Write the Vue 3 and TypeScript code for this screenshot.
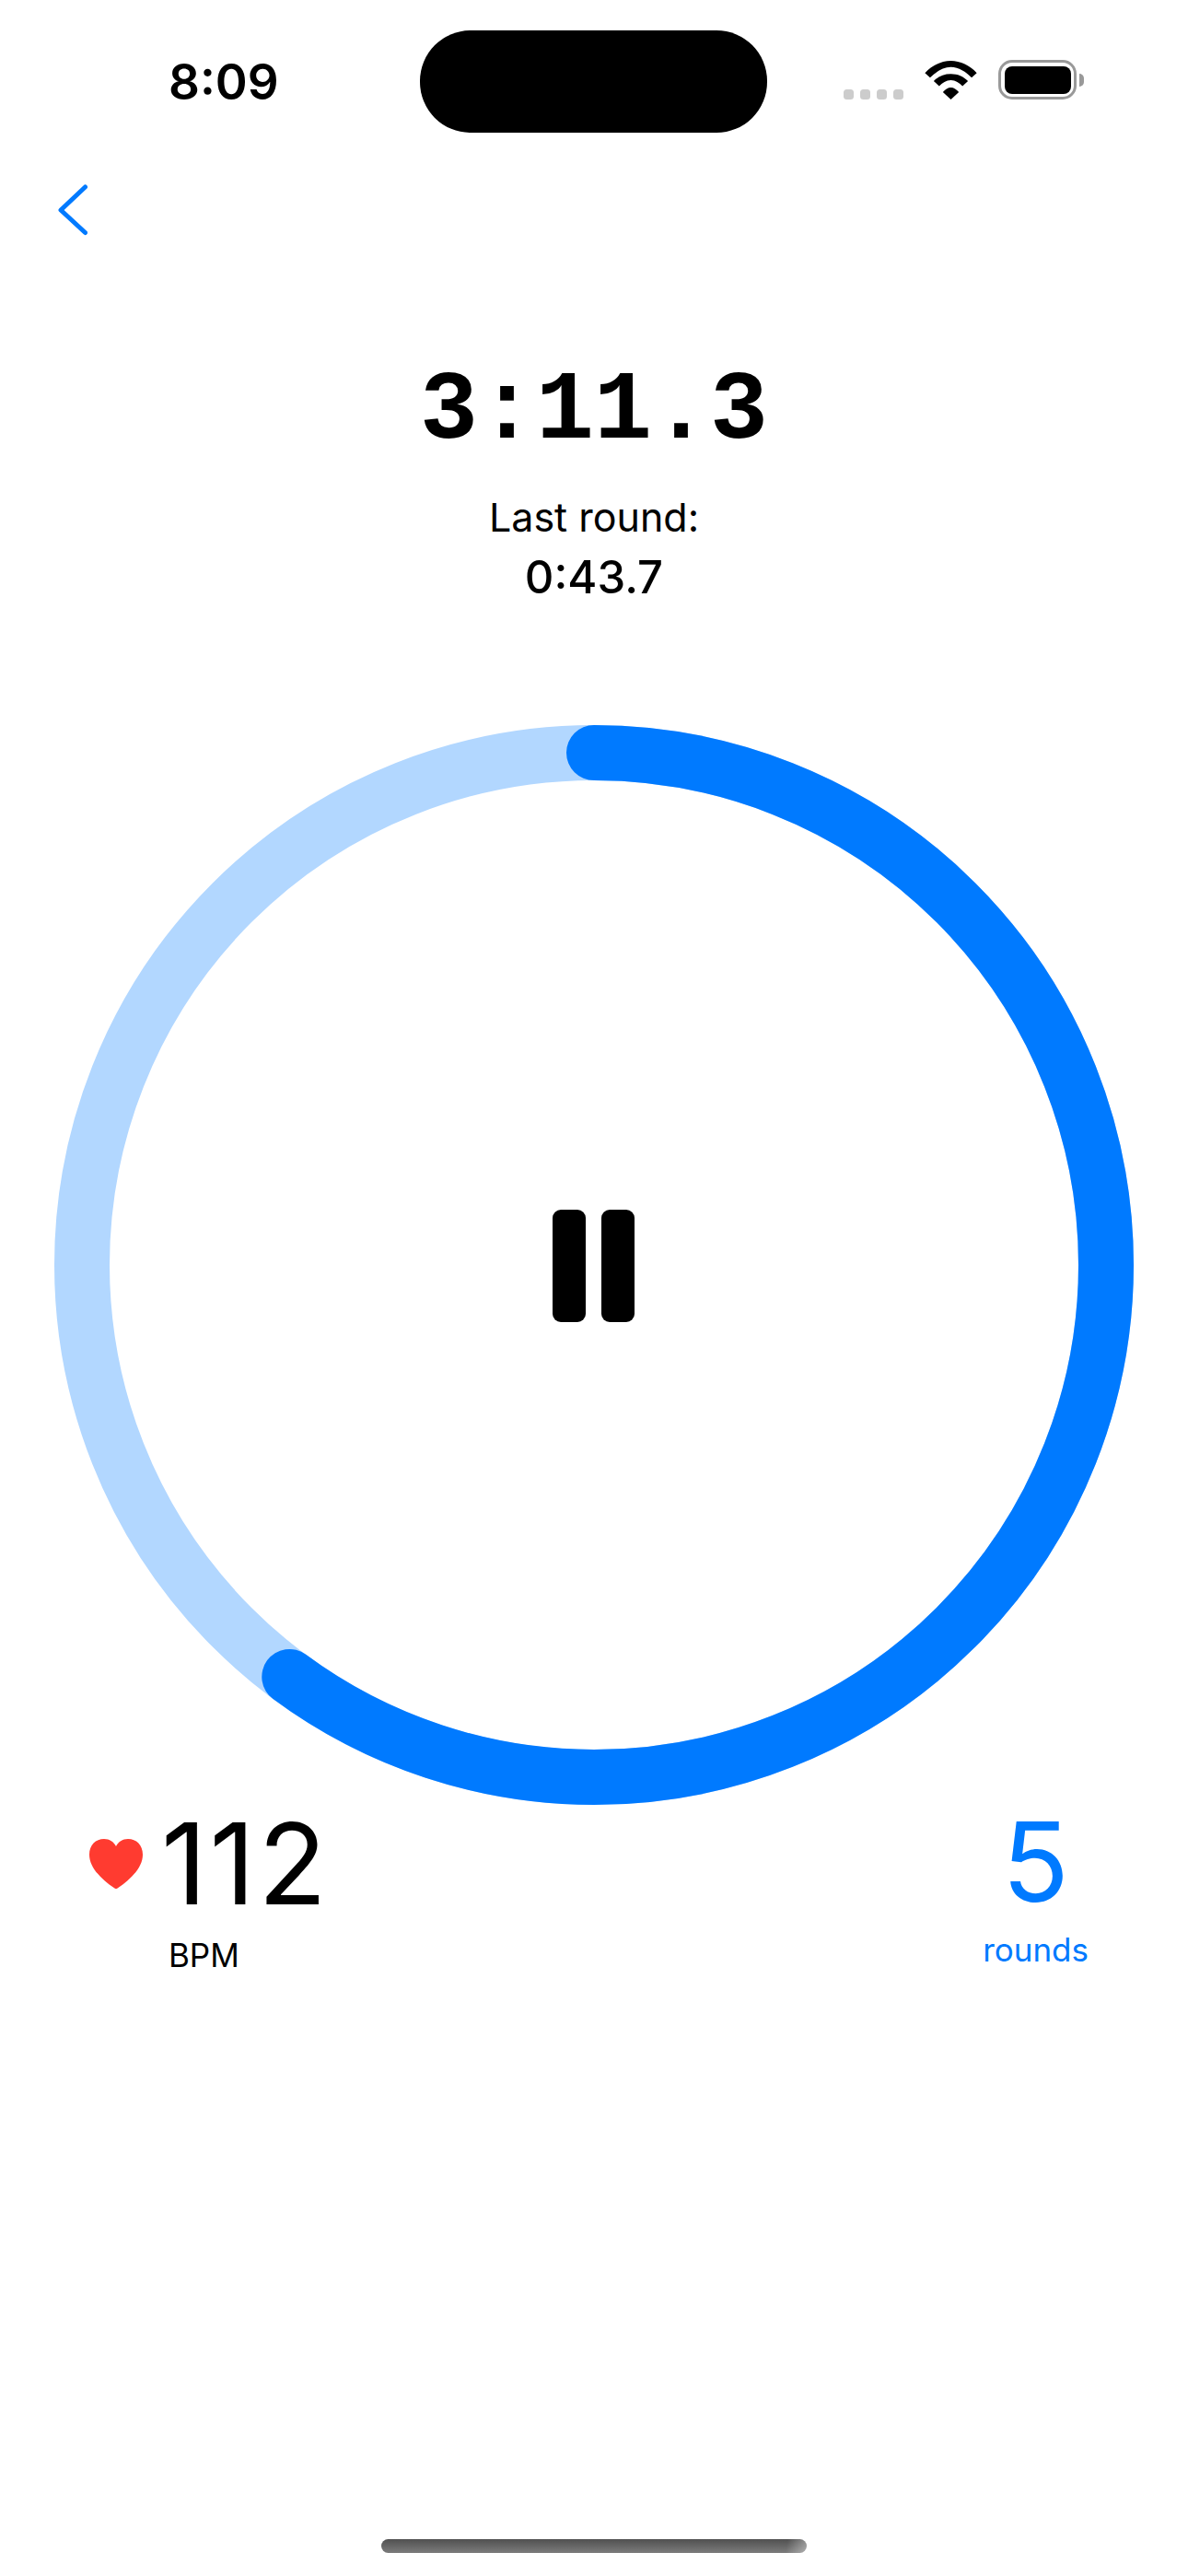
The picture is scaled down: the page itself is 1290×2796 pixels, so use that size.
<script setup lang="ts">
const elapsed = '3:11.3'
const lastRound = '0:43.7'
const bpm = 112
const rounds = 5

// how far round the ring the blue arc goes, in percent
const progress = (216.5 / 360) * 100
const signalDots = [1, 2, 3, 4]
</script>

<template>
  <div class="screen">
    <header class="status">
      <span class="clock">8:09</span>
      <div class="island"></div>
      <div class="indicators">
        <div class="signal">
          <i v-for="dot in signalDots" :key="dot"></i>
        </div>
        <svg class="wifi" width="57" height="42" viewBox="0 0 46 42" preserveAspectRatio="none">
          <path d="M0.3 13.2C6 5 15 0 23 0C31 0 40 5 45.7 13.2L41.2 18.3C36 12 30 6.8 23 6.8C16 6.8 10 12 4.8 18.3Z" />
          <path d="M8 22C12 17 17 14.3 23 14.3C29 14.3 34 17 38 22L33.2 27.6C30.5 24 27 21 23 21C19 21 15.5 24 12.8 27.6Z" />
          <path d="M16 34C18 31 20.5 29 23 29C25.5 29 28 31 30 34L23 42Z" />
        </svg>
        <div class="battery">
          <div class="battery-body"><div class="battery-fill"></div></div>
          <div class="battery-nub"></div>
        </div>
      </div>
    </header>

    <nav class="nav">
      <svg width="32" height="58" viewBox="0 0 32 58" fill="none">
        <path d="M29.5 5L3 30L29.5 54.5" stroke="#007aff" stroke-width="5" stroke-linecap="round" stroke-linejoin="round" />
      </svg>
    </nav>

    <section class="timer">
      <div class="elapsed">{{ elapsed }}</div>
      <div class="last-label">Last round:</div>
      <div class="last-value">{{ lastRound }}</div>
    </section>

    <section class="ring">
      <svg width="1172" height="1172" viewBox="0 0 1172 1172" fill="none">
        <circle cx="586" cy="586" r="556" stroke="#b2d7ff" stroke-width="60" />
        <circle
          cx="586"
          cy="586"
          r="556"
          stroke="#007aff"
          stroke-width="60"
          stroke-linecap="round"
          pathLength="100"
          :stroke-dasharray="`${progress} 100`"
          transform="rotate(-90 586 586)"
        />
      </svg>
      <div class="pause">
        <span></span>
        <span></span>
      </div>
    </section>

    <section class="stats">
      <div class="stat">
        <div class="heart-row">
          <svg width="58" height="54" viewBox="0 0 58 54">
            <path fill="#ff3b30" d="M29 8C31.5 3 36 0 42 0C51 0 58 6.5 58 17C58 32 43 45 32 52.5C30.5 53.5 29.5 54 29 54C28.5 54 27.5 53.5 26 52.5C15 45 0 32 0 17C0 6.5 7 0 16 0C22 0 26.5 3 29 8Z" />
          </svg>
          <span class="big bpm">{{ bpm }}</span>
        </div>
        <div class="unit bpm-unit">BPM</div>
      </div>
      <div class="stat blue">
        <span class="big">{{ rounds }}</span>
        <div class="unit">rounds</div>
      </div>
    </section>

    <div class="home-bar"></div>
  </div>
</template>

<style>
html,
body {
  margin: 0;
  background: #fff;
}
</style>

<style scoped>
.screen {
  width: 1290px;
  height: 2796px;
  display: flex;
  flex-direction: column;
  background: #fff;
  color: #000;
  font-family: Inter, 'Liberation Sans', sans-serif;
  overflow: hidden;
}

.status {
  height: 111px;
  padding-top: 33px;
  display: flex;
  align-items: center;
}

.clock {
  width: 273px;
  margin-left: 183px;
  font-size: 53px;
  line-height: 64px;
  font-weight: 600;
}

.island {
  width: 377px;
  height: 111px;
  border-radius: 55px;
  background: #000;
}

.indicators {
  align-self: flex-start;
  margin-left: 83px;
  margin-top: 32px;
  display: flex;
  align-items: flex-end;
}

.signal {
  display: flex;
  gap: 7px;
}

.signal i {
  width: 11px;
  height: 11px;
  border-radius: 3.5px;
  background: #ccc;
}

.wifi {
  margin-left: 23px;
  fill: #000;
}

.battery {
  margin-left: 23px;
  display: flex;
  align-items: center;
}

.battery-body {
  width: 85px;
  height: 43px;
  box-sizing: border-box;
  border: 3.5px solid #999;
  border-radius: 15px;
  padding: 3.5px;
}

.battery-fill {
  height: 100%;
  border-radius: 8px;
  background: #000;
}

.battery-nub {
  width: 5px;
  height: 14px;
  margin-left: 3px;
  border-radius: 0 5px 5px 0;
  background: #999;
}

.nav {
  height: 58px;
  margin-top: 54px;
  padding-left: 63px;
}

.nav svg {
  display: block;
}

.timer {
  margin-top: 132px;
  display: flex;
  flex-direction: column;
  align-items: center;
}

.elapsed {
  font-family: 'Liberation Mono', monospace;
  font-weight: 700;
  font-size: 105px;
  line-height: 120px;
}

.last-label {
  margin-top: 20px;
  font-size: 43px;
  line-height: 66px;
}

.last-value {
  margin-top: 3px;
  font-size: 49px;
  line-height: 60px;
  font-weight: 550;
}

.ring {
  position: relative;
  margin-top: 130px;
  height: 1172px;
  display: flex;
  justify-content: center;
}

.ring svg {
  display: block;
}

.pause {
  position: absolute;
  left: 600px;
  top: 526px;
  display: flex;
  gap: 17px;
}

.pause span {
  width: 36px;
  height: 122px;
  border-radius: 9px;
  background: #000;
}

.stats {
  margin-top: -8px;
  padding: 0 108px 0 97px;
  display: flex;
  justify-content: space-between;
}

.stat {
  display: flex;
  flex-direction: column;
  align-items: center;
}

.heart-row {
  display: flex;
  align-items: center;
  gap: 20px;
}

.big {
  font-size: 120px;
  font-weight: 400;
  line-height: 144px;
}

.bpm {
  font-size: 122px;
  font-weight: 375;
  letter-spacing: 3px;
}

.unit {
  margin-top: 6px;
  font-size: 35px;
  line-height: 42px;
  font-weight: 400;
}

.bpm-unit {
  margin-right: 12px;
}

.blue {
  color: #007aff;
  margin-top: -2px;
}

.blue .unit {
  margin-top: 2px;
}

.home-bar {
  width: 462px;
  height: 15px;
  margin: auto auto 25px;
  border-radius: 8px;
  background:
    linear-gradient(100deg, transparent 95%, rgba(255, 255, 255, 0.4)),
    linear-gradient(180deg, #505050, #7c7c7c);
}
</style>
